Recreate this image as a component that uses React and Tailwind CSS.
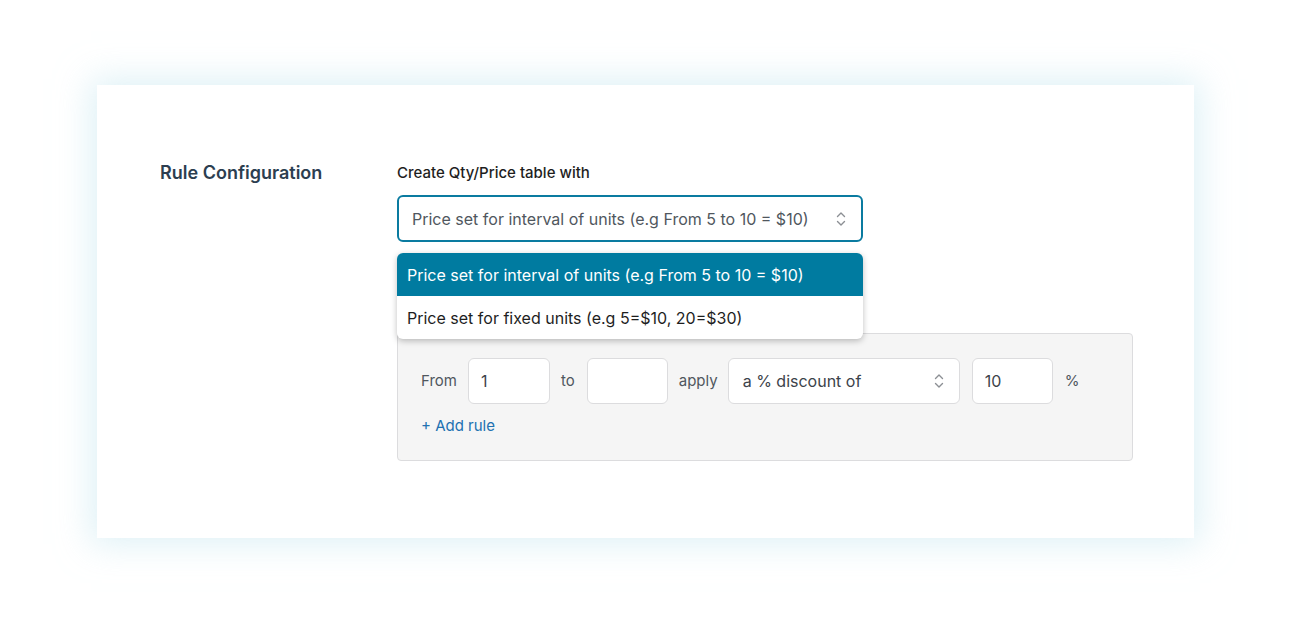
import { useState } from 'react';

function Chevrons({ className = '' }) {
  return (
    <svg viewBox="0 0 12 18" className={className} fill="none" stroke="currentColor" strokeWidth="1.4" strokeLinecap="round" strokeLinejoin="round">
      <path d="M2.5 6.5 6 3l3.5 3.5" />
      <path d="M2.5 11.5 6 15l3.5-3.5" />
    </svg>
  );
}

const options = [
  'Price set for interval of units (e.g From 5 to 10 = $10)',
  'Price set for fixed units (e.g 5=$10, 20=$30)',
];

export default function App() {
  const [selected] = useState(0);

  return (
    <div className="min-h-screen bg-white pt-[85px] pl-[97px] font-['Inter',sans-serif]">
      <div className="w-[1097px] h-[453px] bg-white shadow-[0_0_32px_6px_rgba(200,232,240,0.6)] pt-[76px] pl-[63px]">
        <div className="flex">
          <h2 className="w-[237px] text-[18px] font-semibold text-[#2c3e50] leading-[24px]">Rule Configuration</h2>

          <div className="flex flex-col">
            <label className="text-[15px] font-medium text-[#1e1e1e] leading-[24px]">Create Qty/Price table with</label>

            <div className="relative mt-[10px] w-[466px]">
              <div className="h-[47px] rounded-[6px] border-2 border-[#0a7ba0] flex items-center justify-between pl-[13px] pr-[14px] bg-white">
                <span className="text-[16px] text-[#50575e]">{options[selected]}</span>
                <Chevrons className="w-[12px] h-[18px] text-[#8c8f94]" />
              </div>

              <ul className="absolute z-10 left-0 top-[58px] w-[466px] rounded-[6px] bg-white shadow-[0_2px_6px_rgba(0,0,0,0.25)] overflow-hidden">
                {options.map((o, i) => (
                  <li
                    key={o}
                    className={
                      i === selected
                        ? 'h-[43px] flex items-center pl-[10px] text-[16px] bg-[#007ba0] text-white'
                        : 'h-[43px] flex items-center pl-[10px] text-[16px] text-[#1e1e1e]'
                    }
                  >
                    {o}
                  </li>
                ))}
              </ul>
            </div>

            <div className="mt-[91px] w-[736px] h-[128px] bg-[#f5f5f5] border border-[#dcdcde] rounded-[4px] pt-[24px] pl-[23px]">
              <div className="flex items-center text-[15px] text-[#50575e]">
                <span>From</span>
                <input
                  defaultValue="1"
                  className="ml-[11px] w-[82px] h-[46px] rounded-[6px] border border-[#dcdcde] bg-white pl-[12px] text-[16px] text-[#3c434a] outline-none"
                />
                <span className="ml-[11px]">to</span>
                <input
                  defaultValue=""
                  className="ml-[12px] w-[81px] h-[46px] rounded-[6px] border border-[#dcdcde] bg-white pl-[12px] text-[16px] outline-none"
                />
                <span className="ml-[11px]">apply</span>
                <div className="ml-[10px] w-[232px] h-[46px] rounded-[6px] border border-[#dcdcde] bg-white flex items-center justify-between pl-[14px] pr-[14px]">
                  <span className="text-[16px] text-[#3c434a]">a % discount of</span>
                  <Chevrons className="w-[12px] h-[18px] text-[#8c8f94]" />
                </div>
                <input
                  defaultValue="10"
                  className="ml-[12px] w-[81px] h-[46px] rounded-[6px] border border-[#dcdcde] bg-white pl-[12px] text-[16px] text-[#3c434a] outline-none"
                />
                <span className="ml-[12px]">%</span>
              </div>
              <button className="mt-[11px] text-[15px] text-[#2271b1]">+ Add rule</button>
            </div>
          </div>
        </div>
      </div>
    </div>
  );
}
